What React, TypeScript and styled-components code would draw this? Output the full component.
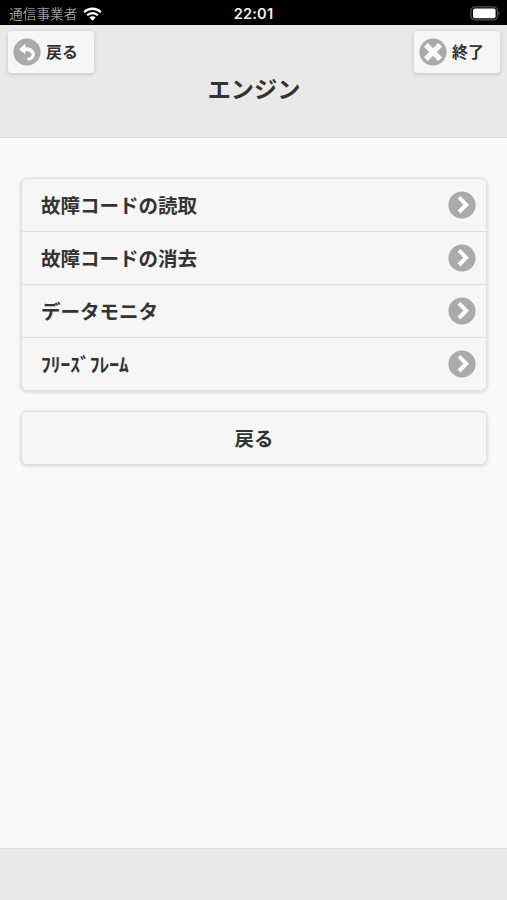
import React from "react";
import styled, { createGlobalStyle } from "styled-components";

const GlobalStyle = createGlobalStyle`
  * { box-sizing: border-box; }
  body { margin: 0; background: #f9f9f9; }
  button { font: inherit; color: inherit; margin: 0; }
`;

const Screen = styled.div`
  display: flex;
  flex-direction: column;
  height: 900px;
  background: #f9f9f9;
  color: #333;
  font-family: "Noto Sans CJK JP", "Liberation Sans", sans-serif;
  font-weight: 700;
`;

const StatusBar = styled.div`
  display: grid;
  grid-template-columns: 1fr auto 1fr;
  align-items: center;
  height: 25px;
  padding: 1px 6px 0 9px;
  background: #000;
  color: #fff;
`;

const Carrier = styled.div`
  display: flex;
  align-items: center;
  gap: 6px;
  height: 24px;
  font-size: 13.7px;
  line-height: 22px;
  font-weight: 300;
  color: #cfcfcf;
  span { padding-bottom: 1px; }
`;

const Clock = styled.div`
  font: 600 14.6px/24px Inter, sans-serif;
  letter-spacing: 0.2px;
  margin-right: 3px;
  padding-top: 1px;
  color: #eee;
`;

const BatterySlot = styled.div`
  display: flex;
  justify-content: flex-end;
`;

const Header = styled.header`
  height: 113px;
  padding: 6px 7px 0 8px;
  background: #e9e9e9;
  border-bottom: 1px solid #dddddd;
`;

const HeaderActions = styled.div`
  display: flex;
  justify-content: space-between;
`;

const SmallButton = styled.button`
  display: flex;
  align-items: center;
  gap: 5px;
  width: 86px;
  height: 42px;
  padding: 0 0 0 5px;
  border: 0;
  border-radius: 4px;
  background: #f6f6f6;
  box-shadow: 0 1px 4px rgba(0, 0, 0, 0.17);
  font-size: 15.9px;
  line-height: 24px;
  text-shadow: 0 1px 0 #f3f3f3;
  span { padding-bottom: 1px; }
`;

const Title = styled.h1`
  margin: 0;
  text-align: center;
  font-size: 23.2px;
  line-height: 30px;
  text-shadow: 0 1px 0 #eee;
`;

const Content = styled.main`
  flex: 1;
  display: flex;
  flex-direction: column;
  gap: 20px;
  padding: 40px 20px 0 21px;
`;

const Menu = styled.ul`
  list-style: none;
  margin: 0;
  padding: 0;
  border: 1px solid #dfdfdf;
  border-radius: 6px;
  background: #f6f6f6;
  box-shadow: 0 1px 4px rgba(0, 0, 0, 0.16);
`;

const MenuItem = styled.li`
  display: flex;
  align-items: center;
  justify-content: space-between;
  height: 53px;
  padding: 0 10px 0 19px;
  font-size: 19.5px;
  line-height: 28px;
  text-shadow: 0 1px 0 #f3f3f3;
  span { padding-bottom: 1px; }
  &:first-child { height: 52px; }
  & + & { border-top: 1px solid #dfdfdf; }
`;

const WideButton = styled.button`
  height: 54px;
  padding: 0 0 1px;
  border: 1px solid #dfdfdf;
  border-radius: 6px;
  background: #f6f6f6;
  box-shadow: 0 1px 4px rgba(0, 0, 0, 0.16);
  font-size: 19.5px;
  line-height: 28px;
`;

const Footer = styled.footer`
  height: 52px;
  background: #e9e9e9;
  border-top: 1px solid #dddddd;
`;

const Disc = styled.svg`
  display: block;
  flex: none;
  width: 28px;
  height: 28px;
`;

function DiscIcon({ kind }: { kind: "back" | "close" | "next" }) {
  return (
    <Disc viewBox="0 0 28 28" fill="none" stroke="#fff">
      <circle cx="14" cy="14" r="13.6" fill="#aaaaaa" stroke="none" />
      {kind === "next" && <path d="M11 6.4l7.2 7.3-7.2 7.3" strokeWidth="4" />}
      {kind === "close" && <path d="M6.9 6.9l14.2 14.2M21.1 6.9l-14.2 14.2" strokeWidth="5.4" />}
      {kind === "back" && (
        <path
          d="M6 11.2L12.4 5.8v3.4c5.6 0 9.4 2.7 9.4 7 0 3.8-2.9 6.3-7.2 6.4l-.6-2.7c2.8-.1 4.6-1.4 4.6-3.4 0-2.3-2.1-3.5-6.2-3.5v3.6z"
          fill="#fff"
          stroke="none"
        />
      )}
    </Disc>
  );
}

function WifiIcon() {
  return (
    <svg width="19" height="14" viewBox="0 0 19 14" fill="none" stroke="#fff" strokeWidth="2.3">
      <path d="M1.1 5.2a12 12 0 0 1 16.8 0M4.1 8.3a7.7 7.7 0 0 1 10.8 0" />
      <path d="M6.4 10.6a4.4 4.4 0 0 1 6.2 0L9.5 13.8z" fill="#fff" stroke="none" />
    </svg>
  );
}

function BatteryIcon() {
  return (
    <svg width="31" height="15" viewBox="0 0 31 15">
      <rect x="0.9" y="0.9" width="26.6" height="13" rx="4" fill="none" stroke="#555" strokeWidth="1.2" />
      <rect x="3" y="2.6" width="22.6" height="9.6" rx="2" fill="#fff" />
      <path d="M28.6 5.2q2 2.2 0 4.4z" fill="#666" />
    </svg>
  );
}

const items = ["故障コードの読取", "故障コードの消去", "データモニタ", "ﾌﾘｰｽﾞﾌﾚｰﾑ"];

export default function App() {
  return (
    <Screen lang="ja">
      <GlobalStyle />
      <StatusBar>
        <Carrier>
          <span>通信事業者</span>
          <WifiIcon />
        </Carrier>
        <Clock>22:01</Clock>
        <BatterySlot>
          <BatteryIcon />
        </BatterySlot>
      </StatusBar>
      <Header>
        <HeaderActions>
          <SmallButton>
            <DiscIcon kind="back" />
            <span>戻る</span>
          </SmallButton>
          <SmallButton>
            <DiscIcon kind="close" />
            <span>終了</span>
          </SmallButton>
        </HeaderActions>
        <Title>エンジン</Title>
      </Header>
      <Content>
        <Menu>
          {items.map((label) => (
            <MenuItem key={label}>
              <span>{label}</span>
              <DiscIcon kind="next" />
            </MenuItem>
          ))}
        </Menu>
        <WideButton>戻る</WideButton>
      </Content>
      <Footer />
    </Screen>
  );
}
